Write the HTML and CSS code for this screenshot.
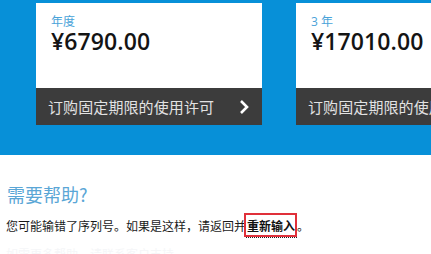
FILE: index.html
```html
<!DOCTYPE html>
<html lang="zh-CN">
<head>
<meta charset="utf-8">
<link rel="stylesheet" href="styles.css">
</head>
<body>
<div class="band">
  <div class="card">
    <div class="card-top">
      <div class="term">年度</div>
      <div class="price">¥6790.00</div>
    </div>
    <div class="card-bar">
      <span class="bar-text">订购固定期限的使用许可</span>
      <svg class="chev" width="10" height="16" viewBox="0 0 10 16"><path d="M2 2 L8 8 L2 14" fill="none" stroke="#fff" stroke-width="2.6"/></svg>
    </div>
  </div>
  <div class="card">
    <div class="card-top">
      <div class="term">3 年</div>
      <div class="price">¥17010.00</div>
    </div>
    <div class="card-bar">
      <span class="bar-text">订购固定期限的使用许可</span>
      <svg class="chev" width="10" height="16" viewBox="0 0 10 16"><path d="M2 2 L8 8 L2 14" fill="none" stroke="#fff" stroke-width="2.6"/></svg>
    </div>
  </div>
</div>
<div class="help">
  <h2 class="help-title">需要帮助?</h2>
  <p class="help-text">您可能输错了序列号。如果是这样，请返回并<span class="retry">重新输入</span>。</p>
  <p class="faint">如需更多帮助，请联系客户支持</p>
</div>
</body>
</html>
```
FILE: styles.css
```css
html, body {
  margin: 0;
  padding: 0;
  background: #fff;
  overflow: hidden;
  width: 431px;
  height: 254px;
}
body {
  font-family: "Noto Sans CJK SC", sans-serif;
}
.band {
  background: #0790d8;
  height: 155px;
  box-sizing: border-box;
  padding: 3px 0 0 36px;
  display: flex;
  gap: 34px;
  overflow: hidden;
}
.card {
  flex: 0 0 226px;
  width: 226px;
  display: flex;
  flex-direction: column;
}
.card-top {
  background: #fff;
  height: 85px;
  box-sizing: border-box;
  padding: 12px 0 0 15px;
}
.term {
  font-family: "Open Sans", "Noto Sans CJK SC", sans-serif;
  font-size: 12px;
  line-height: 14px;
  color: #4aa3d9;
}
.price {
  font-family: "Open Sans", "Noto Sans CJK SC", sans-serif;
  font-weight: 600;
  font-size: 23px;
  line-height: 24px;
  color: #141414;
  letter-spacing: 0.1px;
}
.card-bar {
  background: #3c3c3c;
  height: 37px;
  display: flex;
  align-items: center;
  justify-content: space-between;
  padding: 0 13px 0 12px;
  overflow: hidden;
}
.bar-text {
  font-size: 15px;
  color: #e2e2e2;
  white-space: nowrap;
  letter-spacing: 0.1px;
}
.chev {
  flex: 0 0 auto;
}
.help {
  padding: 0 0 0 6px;
}
.help-title {
  margin: 28px 0 0 1px;
  font-weight: 400;
  font-size: 18px;
  line-height: 23px;
  color: #5aa6d6;
}
.help-text {
  margin: 7px 0 0 0;
  font-size: 12px;
  line-height: 26px;
  color: #1a1a1a;
  white-space: nowrap;
}
.retry {
  display: inline-block;
  font-weight: 700;
  color: #111;
  line-height: 19px;
  padding: 1px 0 0 1px;
  border: 2px solid #e0303a;
  margin-left: -2px;
  position: relative;
}
.retry::after {
  content: "";
  position: absolute;
  left: 0;
  right: -2px;
  bottom: -3px;
  border-bottom: 1px dotted #222;
}
.faint {
  margin: 8px 0 0 0;
  font-size: 12px;
  line-height: 14px;
  color: #f5f6f8;
  white-space: nowrap;
}
```
